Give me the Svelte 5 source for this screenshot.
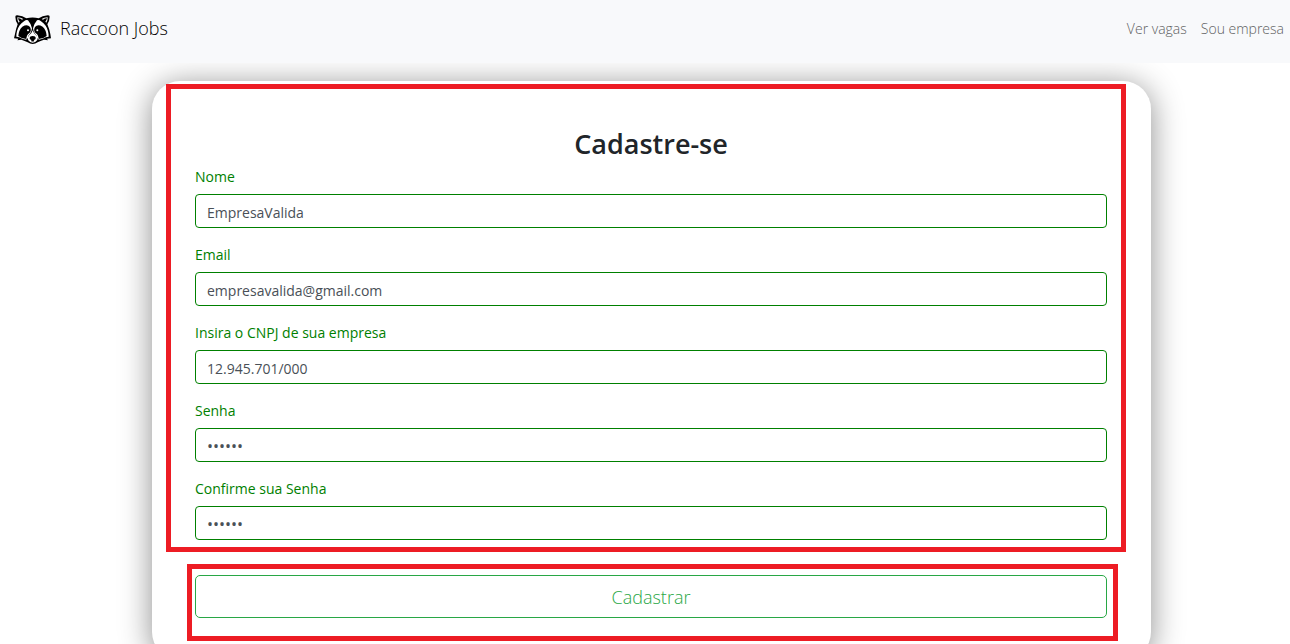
<script>
  let fields = $state([
    { id: 'nome', label: 'Nome', type: 'text', value: 'EmpresaValida' },
    { id: 'email', label: 'Email', type: 'email', value: 'empresavalida@gmail.com' },
    { id: 'cnpj', label: 'Insira o CNPJ de sua empresa', type: 'text', value: '12.945.701/000' },
    { id: 'senha', label: 'Senha', type: 'password', value: '123456' },
    { id: 'confirma', label: 'Confirme sua Senha', type: 'password', value: '123456' }
  ]);
</script>

<header>
  <a class="brand" href="#inicio">
    <svg viewBox="18 21 111 87" width="37" height="29" aria-hidden="true">
      <path d="M22 26 Q22 22 28 22 Q44 23 55 31 Q74 26 92 31 Q103 23 119 22 Q125 22 125 26 Q125 38 118 49 Q125 65 127 78 L129 91 L117 92 L120 97 L108 95 Q97 99 89 103 Q82 108 74 108 Q66 108 59 103 Q50 99 40 95 L28 97 L31 92 L18 91 L21 78 Q23 65 29 49 Q22 38 22 26Z" />
      <path class="w" d="M28 28 Q39 28 46 33 L42 35 Q35 30 30 31 Q31 37 35 41 L32 44 Q27 36 28 28Z M119 28 Q108 28 101 33 L105 35 Q112 30 117 31 Q116 37 112 41 L115 44 Q120 36 119 28Z" />
      <path class="w" d="M48 40 Q55 34 60 37 Q68 46 72 61 Q71 71 66 77 Q59 82 60 90 L54 95 Q42 93 34 88 L25 86 Q25 67 34 53 Q40 45 48 40Z M99 40 Q92 34 87 37 Q79 46 75 61 Q76 71 81 77 Q88 82 87 90 L93 95 Q105 93 113 88 L122 86 Q122 67 113 53 Q107 45 99 40Z" />
      <path d="M43 56 Q58 47 66 57 Q72 67 64 76 Q56 80 55 93 Q40 92 31 84 Q32 66 43 56Z M104 56 Q89 47 81 57 Q75 67 83 76 Q91 80 92 93 Q107 92 116 84 Q115 66 104 56Z" />
      <path class="w" d="M74 67 Q77 78 86 83 Q90 88 88 96 Q82 104 74 104 Q66 104 60 96 Q58 88 62 83 Q71 78 74 67Z" />
      <ellipse cx="74" cy="90" rx="9" ry="6" />
      <path d="M72 94h4l3 5q-5 3-10 0z" />
      <circle class="w" cx="60" cy="67" r="3" />
      <circle class="w" cx="88" cy="67" r="3" />
    </svg>
    <span>Raccoon Jobs</span>
  </a>
  <nav>
    <a href="#vagas">Ver vagas</a>
    <a href="#empresa">Sou empresa</a>
  </nav>
</header>

<main>
  <form class="card" onsubmit={(e) => e.preventDefault()}>
    <section class="details">
      <h2>Cadastre-se</h2>
      {#each fields as field (field.id)}
        <div class="field">
          <label for={field.id}>{field.label}</label>
          <input id={field.id} type={field.type} value={field.value} autocomplete="off" />
        </div>
      {/each}
    </section>
    <div class="actions">
      <button type="submit">Cadastrar</button>
    </div>
  </form>
</main>

<style>
  :global(body) {
    margin: 0;
    background: #fff;
    color: #212529;
    font-family: "Open Sans", "Noto Sans", sans-serif;
    font-size: 14px;
  }
  header {
    display: flex;
    justify-content: space-between;
    align-items: flex-start;
    box-sizing: border-box;
    min-height: 63px;
    padding: 15px 6px 0 14px;
    background: #f8f9fb;
  }
  a {
    color: inherit;
    text-decoration: none;
  }
  .brand {
    display: flex;
    gap: 9px;
    color: #000;
    font-size: 18px;
    line-height: 26px;
    font-weight: 300;
  }
  svg {
    fill: #000;
  }
  svg .w {
    fill: #fff;
  }
  nav {
    display: flex;
    gap: 14px;
    color: #606162;
    font-size: 14px;
    font-weight: 300;
    line-height: 28px;
  }
  main {
    padding: 18px 139px 0 152px;
    overflow: hidden;
  }
  .card {
    padding: 46px 44px 42px 43px;
    border-radius: 28px;
    background: #fff;
    box-shadow: 0 4px 32px rgba(0, 0, 0, 0.45);
  }
  .details,
  .actions {
    position: relative;
  }
  .details::after,
  .actions::after {
    content: "";
    position: absolute;
    border: 5px solid #ed1c24;
    pointer-events: none;
  }
  .details::after {
    inset: -43px -19px -12px -29px;
  }
  .actions::after {
    inset: -11px -11px -23px -8px;
  }
  h2 {
    margin: 0 0 5px;
    font-size: 27px;
    line-height: 34px;
    font-weight: 600;
    text-align: center;
  }
  .field {
    display: flex;
    flex-direction: column;
    gap: 6px;
    margin-bottom: 16px;
  }
  .field:last-child {
    margin-bottom: 35px;
  }
  label {
    color: #008000;
    line-height: 22px;
  }
  input {
    box-sizing: border-box;
    width: 100%;
    height: 34px;
    padding: 2px 11px 0;
    border: 1px solid #008000;
    border-radius: 4px;
    background: #fff;
    color: #495057;
    font: inherit;
    outline: none;
  }
  input[type="password"] {
    font-size: 16px;
  }
  button {
    display: block;
    box-sizing: border-box;
    width: 100%;
    height: 43px;
    padding: 0;
    border: 1px solid #28a745;
    border-radius: 5px;
    background: #fff;
    color: #28a745;
    font: inherit;
    font-size: 18px;
    font-weight: 300;
  }
</style>
